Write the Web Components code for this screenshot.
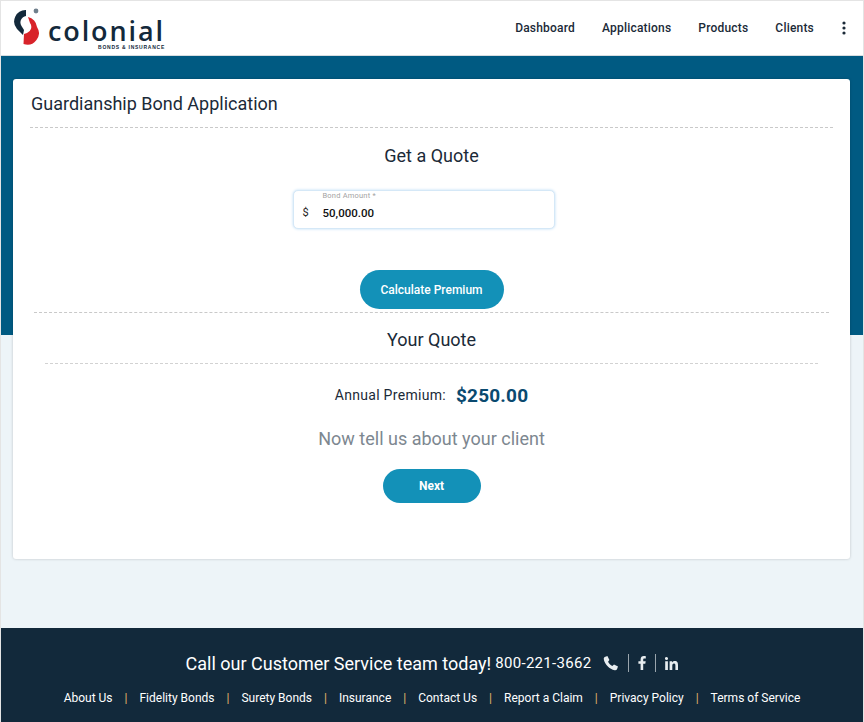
<!DOCTYPE html>
<html>
<head>
<meta charset="utf-8">
<title>Guardianship Bond Application</title>
<style>
    html, body { margin: 0; padding: 0; background: #fff; }
    body {
        width: 864px;
        height: 722px;
        overflow: hidden;
        box-sizing: border-box;
        border: 1px solid #e4e4e4;
        border-bottom: 0;
        font-family: Roboto, "Liberation Sans", sans-serif;
    }
</style>
</head>
<body>
<app-header></app-header>
<quote-page>
    <quote-card>
        <span slot="title">Guardianship Bond Application</span>
        <section-title>Get a Quote</section-title>
        <bond-field label="Bond Amount *" value="50,000.00"></bond-field>
        <pill-button width="144" height="39" size="12">Calculate Premium</pill-button>
    </quote-card>
</quote-page>
<app-footer></app-footer>

<script>
class AppHeader extends HTMLElement {
    connectedCallback() {
        this.attachShadow({ mode: 'open' });
        this.shadowRoot.innerHTML = `
            <style>
                :host {
                    display: flex;
                    align-items: center;
                    justify-content: space-between;
                    height: 54px;
                    background: white;
                    padding: 0 17px 0 12px;
                    box-sizing: border-box;
                }
                .logo { display: flex; align-items: flex-start; }
                .wordmark { display: flex; flex-direction: column; align-items: flex-end; margin-left: 9px; }
                .name {
                    font-family: "Open Sans", sans-serif;
                    font-size: 27px;
                    line-height: 27px;
                    font-weight: 600;
                    letter-spacing: 1.9px;
                    color: #13293b;
                    margin-top: 11px;
                }
                .sub {
                    font-family: "Liberation Sans", sans-serif;
                    font-size: 5px;
                    line-height: 6px;
                    font-weight: 700;
                    letter-spacing: 0.75px;
                    color: #13293b;
                }
                nav { display: flex; align-items: center; }
                a {
                    font-size: 12px;
                    font-weight: 500;
                    color: #1b2a38;
                    margin-left: 27px;
                    letter-spacing: 0.2px;
                }
                svg { display: block; }
            </style>
            <div class="logo">
                <svg width="26" height="40" viewBox="0 0 26 40">
                    <path d="M13 4 A11.5 11.5 0 0 0 4 23 L10 29 L11 24 L8.5 20 A6.5 6.5 0 0 1 13 10 Z" fill="#13293b"/>
                    <path d="M15 11 L17 17 A6.5 6.5 0 0 1 14 27 L11 28 L10.5 38 A11.5 11.5 0 0 0 24 21 A11.5 11.5 0 0 0 15 11 Z" fill="#d8232a"/>
                    <circle cx="23" cy="5" r="2.4" fill="#6f7f8c"/>
                </svg>
                <div class="wordmark">
                    <span class="name">colonial</span>
                    <span class="sub">BONDS &amp; INSURANCE</span>
                </div>
            </div>
            <nav>
                <a>Dashboard</a>
                <a>Applications</a>
                <a>Products</a>
                <a>Clients</a>
                <svg width="4" height="14" viewBox="0 0 4 14" style="margin-left:28px">
                    <circle cx="2" cy="2" r="1.6" fill="#1b2a38"/>
                    <circle cx="2" cy="7" r="1.6" fill="#1b2a38"/>
                    <circle cx="2" cy="12" r="1.6" fill="#1b2a38"/>
                </svg>
            </nav>
        `;
    }
}

class QuotePage extends HTMLElement {
    connectedCallback() {
        this.attachShadow({ mode: 'open' });
        this.shadowRoot.innerHTML = `
            <style>
                :host {
                    display: block;
                    height: 573px;
                    box-sizing: border-box;
                    padding: 23px 13px 0 12px;
                    border-top: 1px solid #d8dde0;
                    background: linear-gradient(#005a82 0, #005a82 279px, #edf4f8 279px);
                }
            </style>
            <slot></slot>
        `;
    }
}

class QuoteCard extends HTMLElement {
    connectedCallback() {
        this.attachShadow({ mode: 'open' });
        this.shadowRoot.innerHTML = `
            <style>
                :host {
                    display: block;
                    height: 480px;
                    box-sizing: border-box;
                    background: white;
                    border-radius: 3px;
                    box-shadow: 0 0 3px rgba(0, 0, 0, 0.2);
                    padding: 0 17px;
                    color: #1b2a38;
                }
                h1 {
                    font-size: 18px;
                    line-height: 24px;
                    font-weight: 400;
                    margin: 0;
                    padding: 13px 0 11px 1px;
                    border-bottom: 1px dashed #c9c9c9;
                }
                .quote {
                    display: flex;
                    flex-direction: column;
                    align-items: center;
                }
                ::slotted(section-title) { margin-top: 16px; }
                ::slotted(bond-field) { margin: 22px 16px 0 0; }
                ::slotted(pill-button) { margin-top: 41px; }
                .rule { border-top: 1px dashed #c9c9c9; margin: 3px 4px 0; }
                .result { display: flex; flex-direction: column; align-items: center; }
                .sub-rule { align-self: stretch; border-top: 1px dashed #d2d2d2; margin: 11px 15px 0; }
                .premium { display: flex; align-items: center; margin-top: 18px; height: 26px; }
                .premium span { font-size: 14px; letter-spacing: 0.3px; color: #1b2a38; }
                .premium b { font-size: 19px; font-weight: 700; color: #0a4a70; margin-left: 10px; letter-spacing: 0.2px; }
                .tell { font-size: 18px; line-height: 24px; color: #7d8790; margin-top: 19px; }
                .result pill-button { margin-top: 18px; }
            </style>
            <h1><slot name="title"></slot></h1>
            <div class="quote"><slot></slot></div>
            <div class="rule"></div>
            <div class="result">
                <section-title style="margin-top:15px">Your Quote</section-title>
                <div class="sub-rule"></div>
                <div class="premium"><span>Annual Premium:</span><b>$250.00</b></div>
                <div class="tell">Now tell us about your client</div>
                <pill-button width="98" height="34" size="12" weight="700">Next</pill-button>
            </div>
        `;
    }
}

class SectionTitle extends HTMLElement {
    connectedCallback() {
        this.attachShadow({ mode: 'open' });
        this.shadowRoot.innerHTML = `
            <style>
                :host {
                    display: block;
                    font-size: 18px;
                    line-height: 24px;
                    text-align: center;
                    color: #1b2a38;
                }
            </style>
            <slot></slot>
        `;
    }
}

class BondField extends HTMLElement {
    connectedCallback() {
        this.attachShadow({ mode: 'open' });
        this.shadowRoot.innerHTML = `
            <style>
                :host {
                    display: flex;
                    width: 262px;
                    height: 39px;
                    box-sizing: border-box;
                    background: white;
                    border: 1px solid #d5e8f7;
                    border-radius: 5px;
                    box-shadow: 0 0 3px #bcdcf5;
                    padding-left: 9px;
                }
                .sign { font-size: 11px; width: 20px; padding-top: 15px; color: #222; }
                .label { font-size: 7.5px; line-height: 10px; color: #a3a3a3; letter-spacing: 0.2px; }
                .value { font-size: 11.5px; line-height: 14px; color: #111; margin-top: 5px; font-weight: 500; }
            </style>
            <div class="sign">$</div>
            <div>
                <div class="label">${this.getAttribute('label')}</div>
                <div class="value">${this.getAttribute('value')}</div>
            </div>
        `;
    }
}

class PillButton extends HTMLElement {
    connectedCallback() {
        this.attachShadow({ mode: 'open' });
        const w = this.getAttribute('width');
        const h = this.getAttribute('height');
        this.shadowRoot.innerHTML = `
            <style>
                :host {
                    display: flex;
                    align-items: center;
                    justify-content: center;
                    width: ${w}px;
                    height: ${h}px;
                    border-radius: ${h / 2}px;
                    background: #1391b8;
                    color: white;
                    font-size: ${this.getAttribute('size')}px;
                    font-weight: ${this.getAttribute('weight') || 500};
                }
            </style>
            <slot></slot>
        `;
    }
}

class AppFooter extends HTMLElement {
    connectedCallback() {
        this.attachShadow({ mode: 'open' });
        const links = ['About Us', 'Fidelity Bonds', 'Surety Bonds', 'Insurance', 'Contact Us', 'Report a Claim', 'Privacy Policy', 'Terms of Service'];
        this.shadowRoot.innerHTML = `
            <style>
                :host {
                    display: block;
                    height: 94px;
                    box-sizing: border-box;
                    background: #12293b;
                    color: white;
                    padding-top: 23px;
                }
                .call {
                    display: flex;
                    align-items: center;
                    justify-content: center;
                    height: 24px;
                    font-size: 18px;
                }
                .phone { font-size: 15px; margin-left: 4px; letter-spacing: 0.3px; }
                .icons { display: flex; align-items: center; margin-left: 12px; }
                .icons svg { display: block; }
                .sep { width: 1px; height: 18px; background: #9aa5ad; margin: 0 9px; }
                .links {
                    display: flex;
                    justify-content: center;
                    align-items: center;
                    margin-top: 15px;
                    font-size: 12px;
                    line-height: 16px;
                }
                .bar { color: #e0b56a; margin: 0 12px; }
            </style>
            <div class="call">
                <span>Call our Customer Service team today!</span>
                <span class="phone">800-221-3662</span>
                <div class="icons">
                    <svg width="16" height="16" viewBox="0 0 24 24"><path fill="#e8edf0" d="M6.6 1.5 L9.6 7.5 L7.6 10 C8.8 12.6 11.4 15.2 14 16.4 L16.5 14.4 L22.5 17.4 L21 21.5 C20.4 22.6 19 23 17.6 22.8 C9.8 21.4 2.6 14.2 1.2 6.4 C1 5 1.4 3.6 2.5 3 Z"/></svg>
                    <div class="sep"></div>
                    <svg width="8" height="14" viewBox="0 0 8 14"><path fill="#e8edf0" d="M5.2 14 V7.7 H7.3 L7.7 5.2 H5.2 V3.7 C5.2 3 5.5 2.5 6.4 2.5 H7.8 V0.2 C7.5 0.1 6.7 0 5.8 0 C3.9 0 2.6 1.2 2.6 3.4 V5.2 H0.4 V7.7 H2.6 V14 Z"/></svg>
                    <div class="sep"></div>
                    <svg width="13" height="13" viewBox="0 0 13 13"><path fill="#e8edf0" d="M0.2 4.3 H2.9 V13 H0.2 Z M1.5 0 A1.55 1.55 0 1 1 1.5 3.1 A1.55 1.55 0 1 1 1.5 0 Z M4.6 4.3 H7.1 V5.5 C7.5 4.8 8.4 4.1 9.8 4.1 C12.5 4.1 13 5.9 13 8.2 V13 H10.4 V8.7 C10.4 7.7 10.4 6.4 9 6.4 C7.6 6.4 7.3 7.5 7.3 8.6 V13 H4.6 Z"/></svg>
                </div>
            </div>
            <div class="links">
                ${links.map((l, i) => `<span>${l}</span>${i < links.length - 1 ? '<span class="bar">|</span>' : ''}`).join('')}
            </div>
        `;
    }
}

customElements.define('app-header', AppHeader);
customElements.define('quote-page', QuotePage);
customElements.define('quote-card', QuoteCard);
customElements.define('section-title', SectionTitle);
customElements.define('bond-field', BondField);
customElements.define('pill-button', PillButton);
customElements.define('app-footer', AppFooter);
</script>
</body>
</html>
